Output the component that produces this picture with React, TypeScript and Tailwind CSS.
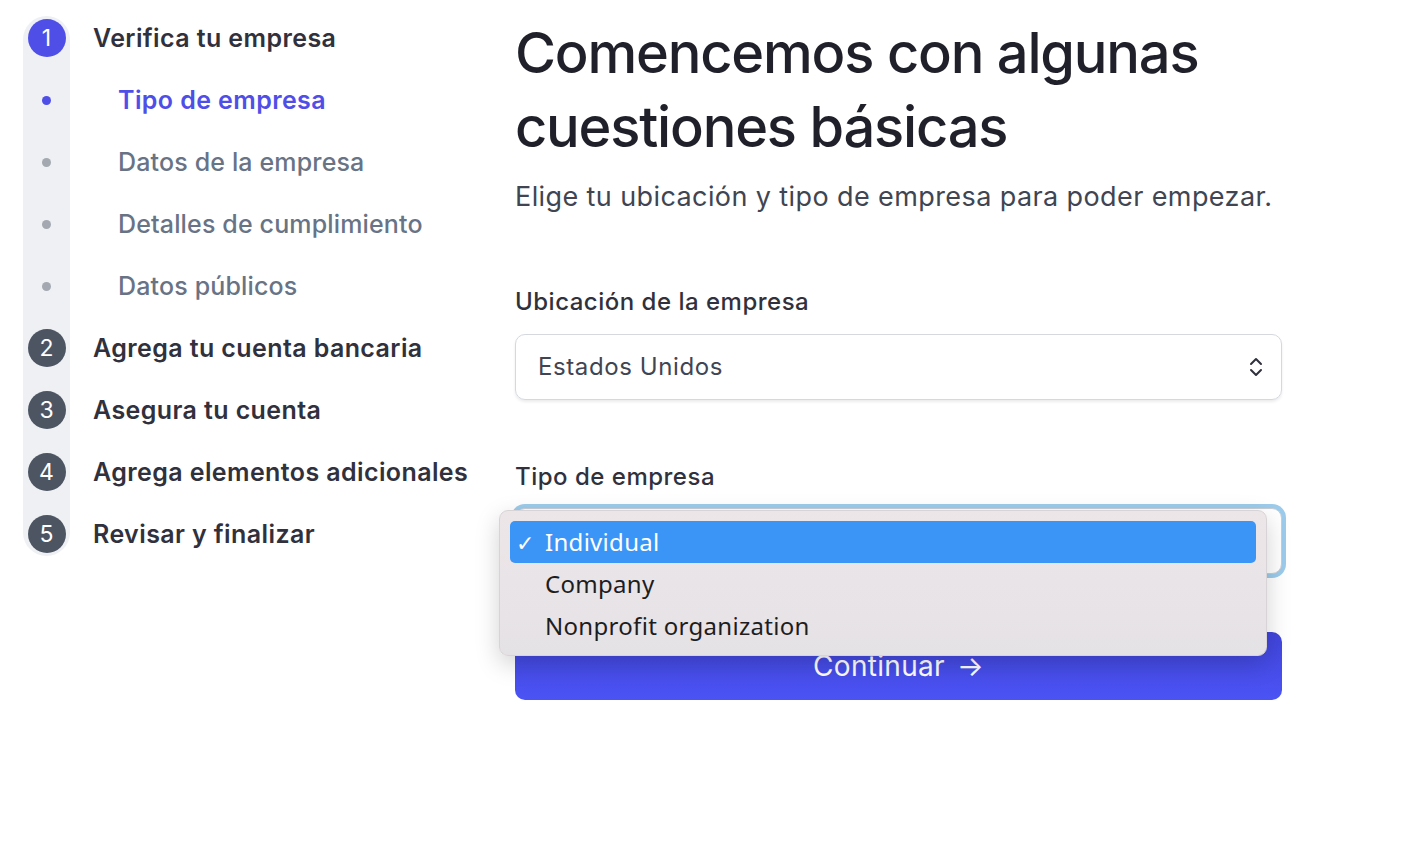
import { FC } from "react"

interface Step {
    label: string
    kind: "num" | "dot"
    num?: number
    active?: boolean
}

const steps: Step[] = [
    { label: "Verifica tu empresa", kind: "num", num: 1, active: true },
    { label: "Tipo de empresa", kind: "dot", active: true },
    { label: "Datos de la empresa", kind: "dot" },
    { label: "Detalles de cumplimiento", kind: "dot" },
    { label: "Datos públicos", kind: "dot" },
    { label: "Agrega tu cuenta bancaria", kind: "num", num: 2 },
    { label: "Asegura tu cuenta", kind: "num", num: 3 },
    { label: "Agrega elementos adicionales", kind: "num", num: 4 },
    { label: "Revisar y finalizar", kind: "num", num: 5 },
]

const options = ["Individual", "Company", "Nonprofit organization"]

const UpDown: FC = () => (
    <svg width="14" height="24" viewBox="0 0 14 24" fill="none">
        <path d="M2 9 L7 4 L12 9" stroke="#30313d" strokeWidth="2" strokeLinecap="round" strokeLinejoin="round" />
        <path d="M2 15 L7 20 L12 15" stroke="#30313d" strokeWidth="2" strokeLinecap="round" strokeLinejoin="round" />
    </svg>
)

const Sidebar: FC = () => {
    return (
        <div className="flex gap-[23px] ml-[23px] mt-[16px] w-[470px] shrink-0">
            <div className="flex flex-col gap-[24px] w-[47px] py-[3px] items-center bg-[#eef0f3] rounded-full self-start">
                {steps.map((s, i) => (
                    <div key={i} className="h-[38px] w-[38px] flex items-center justify-center">
                        {s.kind === "num" ? (
                            <div
                                className={`h-[38px] w-[38px] rounded-full flex items-center justify-center text-white text-[23px] ${
                                    s.active ? "bg-[#4f4fe8]" : "bg-[#4d5563]"
                                }`}
                            >
                                {s.num}
                            </div>
                        ) : (
                            <div
                                className={`h-[9px] w-[9px] rounded-full ${
                                    s.active ? "bg-[#4f4fe8]" : "bg-[#a3a8b1]"
                                }`}
                            />
                        )}
                    </div>
                ))}
            </div>
            <div className="flex flex-col gap-[24px] pt-[4px]">
                {steps.map((s, i) => (
                    <div
                        key={i}
                        className={`h-[38px] flex items-center text-[25px] whitespace-nowrap ${
                            s.kind === "dot" ? "pl-[25px]" : ""
                        } ${
                            s.kind === "num"
                                ? "font-semibold tracking-[0.4px] text-[#30313d]"
                                : s.active
                                ? "font-semibold tracking-[0.4px] text-[#4f4fe8]"
                                : "font-medium tracking-[0.15px] text-[#687385]"
                        }`}
                    >
                        {s.label}
                    </div>
                ))}
            </div>
        </div>
    )
}

const App: FC = () => {
    return (
        <div className="w-[1408px] h-[850px] bg-white flex font-['Inter',sans-serif] overflow-hidden">
            <Sidebar />
            <div className="w-[767px] ml-[22px] pt-[16px]">
                <h1 className="text-[56px] leading-[74px] font-medium text-[#1f2029] tracking-[-1.2px]">
                    Comencemos con algunas cuestiones básicas
                </h1>
                <p className="mt-[15px] text-[27px] leading-[36px] tracking-[0.4px] text-[#414552]">
                    Elige tu ubicación y tipo de empresa para poder empezar.
                </p>

                <div className="mt-[71px] text-[24px] leading-[32px] font-medium tracking-[0.5px] text-[#30313d]">
                    Ubicación de la empresa
                </div>
                <div className="mt-[16px] h-[66px] rounded-[10px] border border-[#d5d8de] shadow-[0_2px_3px_rgba(0,0,0,0.08)] flex items-center justify-between pl-[22px] pr-[18px]">
                    <span className="text-[24px] tracking-[0.6px] text-[#414552]">Estados Unidos</span>
                    <UpDown />
                </div>

                <div className="mt-[61px] text-[24px] leading-[32px] font-medium tracking-[0.5px] text-[#30313d]">
                    Tipo de empresa
                </div>
                <div className="relative mt-[15px]">
                    <div className="h-[66px] rounded-[10px] border border-[#c9cdd4] bg-white ring-4 ring-[#9ccbeb]" />
                    <div className="absolute left-[-16px] top-[2px] w-[768px] rounded-[9px] bg-gradient-to-b from-[#ede6e8] to-[#e5e2e6] border border-[#d8d3d6] shadow-[0_8px_24px_rgba(0,0,0,0.18)] px-[10px] pt-[10px] pb-[8px] font-['Noto_Sans',sans-serif]">
                        {options.map((o, i) => (
                            <div
                                key={o}
                                className={`h-[42px] flex items-center rounded-[5px] text-[24px] tracking-[0.3px] ${
                                    i === 0 ? "bg-[#3b95f7] text-white" : "text-[#1d1d1f]"
                                }`}
                            >
                                <span className="w-[35px] pl-[6px] text-[22px]">{i === 0 ? "✓" : ""}</span>
                                <span>{o}</span>
                            </div>
                        ))}
                    </div>
                </div>

                <button className="mt-[58px] w-full h-[68px] rounded-[10px] bg-gradient-to-b from-[#4145dc] to-[#4b53f4] text-white text-[28px] tracking-[0.3px] flex items-center justify-center gap-[12px]">
                    <span>Continuar</span>
                    <span>→</span>
                </button>
            </div>
        </div>
    )
}

export default App
